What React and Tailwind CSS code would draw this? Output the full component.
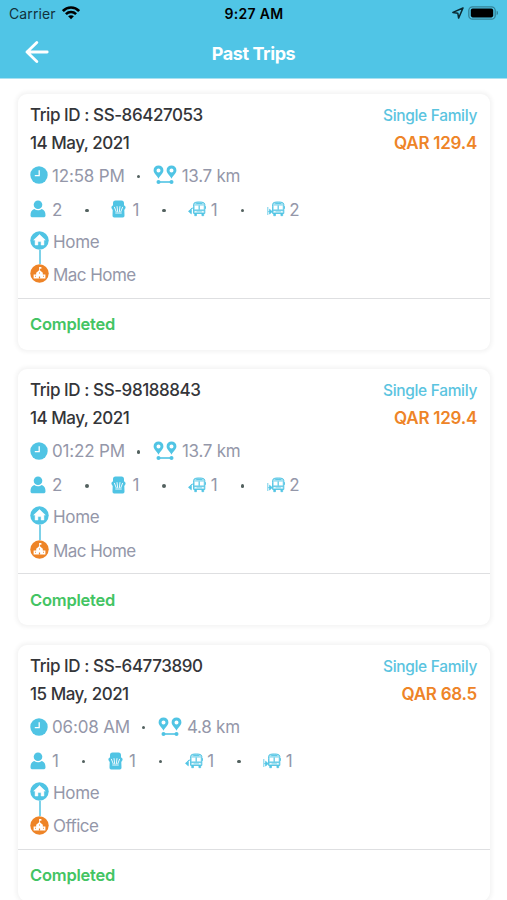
import React from 'react';

const trips = [
  {
    id: 'SS-86427053', date: '14 May, 2021', type: 'Single Family', price: 'QAR 129.4',
    time: '12:58 PM', distance: '13.7 km', counts: [2, 1, 1, 2], from: 'Home', to: 'Mac Home', status: 'Completed',
  },
  {
    id: 'SS-98188843', date: '14 May, 2021', type: 'Single Family', price: 'QAR 129.4',
    time: '01:22 PM', distance: '13.7 km', counts: [2, 1, 1, 2], from: 'Home', to: 'Mac Home', status: 'Completed',
  },
  {
    id: 'SS-64773890', date: '15 May, 2021', type: 'Single Family', price: 'QAR 68.5',
    time: '06:08 AM', distance: '4.8 km', counts: [1, 1, 1, 1], from: 'Home', to: 'Office', status: 'Completed',
  },
];

function WifiIcon() {
  return (
    <svg className="-translate-y-px" width="18" height="14" viewBox="0 0 18 14" fill="none" stroke="#000" strokeWidth="2.6">
      <path d="M.9 5C5.300.4 12.700.4 17.100 5" />
      <path d="M3.900 8.100c2.900-2.800 7.300-2.800 10.200 0" />
      <path d="M6.100 10.300c1.600-1.500 4.200-1.500 5.800 0L9 13.200z" fill="#000" stroke="none" />
    </svg>
  );
}

function LocationIcon() {
  return (
    <svg width="12" height="12" viewBox="0 0 12 12" fill="none" stroke="#0b2a33" strokeWidth="1.500" strokeLinejoin="round">
      <path d="M11 1 .9 5.400l4.900.8.800 4.900z" />
    </svg>
  );
}

function BatteryIcon() {
  return (
    <svg width="31" height="14" viewBox="0 0 31 14">
      <rect x=".8" y=".8" width="26.400" height="12.400" rx="3.800" fill="none" stroke="#348297" strokeWidth="1.300" />
      <rect x="2.800" y="2.600" width="22.400" height="8.800" rx="1.800" fill="#000" />
      <path d="M28.600 4.800c1.900.6 1.900 3.800 0 4.400z" fill="#348297" />
    </svg>
  );
}

function BackIcon() {
  return (
    <svg className="-translate-y-px" width="24" height="22" viewBox="0 0 24 22" fill="none" stroke="#fff" strokeWidth="2.800" strokeLinecap="round" strokeLinejoin="round">
      <path d="M22.200 11H2M11.800 1.500 2 11l9.800 9.500" />
    </svg>
  );
}

function ClockIcon() {
  return (
    <svg width="18" height="18" viewBox="0 0 18 18">
      <circle cx="9" cy="9" r="8.700" fill="#50c4e4" />
      <path d="M9.200 4.200v5.500H4.800" fill="none" stroke="#fff" strokeWidth="1.300" />
    </svg>
  );
}

function RouteIcon() {
  return (
    <svg width="24" height="20" viewBox="0 0 24 20" fill="#50c4e4">
      <path fillRule="evenodd" d="M5.500.4a4.900 4.900 0 0 0-4.900 4.900c0 3.100 3.500 5.400 4.900 8.500 1.400-3.100 4.900-5.400 4.900-8.500A4.900 4.900 0 0 0 5.500.4zm0 3a2 2 0 1 1 0 4 2 2 0 0 1 0-4z" />
      <path fillRule="evenodd" d="M18.500.4a4.900 4.900 0 0 0-4.900 4.900c0 3.100 3.500 5.400 4.900 8.500 1.400-3.100 4.900-5.400 4.900-8.500A4.900 4.900 0 0 0 18.500.4zm0 3a2 2 0 1 1 0 4 2 2 0 0 1 0-4z" />
      <circle cx="5.500" cy="17" r="2" />
      <circle cx="18.500" cy="17" r="2" />
      <path d="M5 16.200h14v1.600H5z" />
    </svg>
  );
}

function PersonIcon() {
  return (
    <svg width="16" height="18" viewBox="0 0 16 18" fill="#50c4e4">
      <circle cx="8" cy="4.800" r="4.300" />
      <path d="M4.200 8.900c2.300 1.900 5.300 1.900 7.600 0 2.600.8 3.700 3.200 3.700 6.300 0 1.400-.8 2.100-2.100 2.100H2.600C1.300 17.300.5 16.600.5 15.200c0-3.100 1.100-5.500 3.700-6.300z" />
    </svg>
  );
}

function SeatIcon() {
  return (
    <svg width="15" height="18" viewBox="0 0 15 18">
      <path d="M4.500.6h6c1.700 0 2.500 1 2.500 2.600v2.400c1.300.2 1.800 1.300 1.500 2.500-.2.900-.8 1.300-1.200 1.800l.2 5.600c0 1.200-.6 1.900-1.700 1.900H3.200c-1.100 0-1.700-.7-1.700-1.900l.2-5.600C1.300 9.400.7 9 .5 8.100.2 6.900.7 5.800 2 5.600V3.200C2 1.600 2.800.6 4.500.6z" fill="#50c4e4" />
      <path d="M3.300 6.900 5.300 12M6 6.200l.7 5.800M9 6.200l-.7 5.800M11.700 6.900 9.700 12M4.300 13h6.400" fill="none" stroke="#fff" strokeWidth=".9" />
    </svg>
  );
}

// side "out" has the arrow leaving the bus, "in" has it going towards the bus
function BusIcon({ side }) {
  return (
    <svg width="18" height="16" viewBox="0 0 18 16" fill="none" stroke="#50c4e4">
      <path d="M5.600 5.200V3.400C5.600 1.500 8 1 11.200 1s5.600.5 5.600 2.400v9H5.600z" fill="#a5e1f1" strokeWidth="1" />
      <path d="M6.800 4.700h3.800v3.700H6.800zM11.800 4.700h3.800v3.700h-3.800z" fill="#fff" stroke="none" />
      <path d="M8.300 2.600h5.800M5.900 9.200h10.700M11.200 4.400v4.300M17.500 5.200v2.600" strokeWidth=".9" />
      <path d="M6.700 12.500h1.800v2.200H6.700zM13.900 12.500h1.800v2.200h-1.800z" fill="#50c4e4" strokeWidth=".7" />
      <path d="M6.900 10.800h1.700M13.900 10.800h1.700" stroke="#fff" strokeWidth="1.100" />
      {side === 'out' ? (
        <path d="M5 7C3.300 7.200 2.400 8 2 9.700M.5 10.300 3.300 8.300v4.500z" fill="#50c4e4" strokeWidth=".8" />
      ) : (
        <path d="M.8 6v8M1.100 10.600h2.500M2.600 8.300l2.600 2.300-2.600 2.400z" fill="#50c4e4" strokeWidth=".8" />
      )}
    </svg>
  );
}

function HomeIcon() {
  return (
    <svg width="19" height="19" viewBox="0 0 19 19">
      <circle cx="9.500" cy="9.500" r="9.200" fill="#50c4e4" />
      <path d="m9.500 3.600 5.800 5.500h-1.400v4.900h-2.800v-3.400H7.900V14H5.100V9.100H3.700z" fill="#fff" stroke="#fff" strokeWidth=".5" strokeLinejoin="round" />
    </svg>
  );
}

function SchoolIcon() {
  return (
    <svg width="19" height="19" viewBox="0 0 19 19">
      <circle cx="9.500" cy="9.500" r="9.200" fill="#ee8427" />
      <path d="M9.100 3h2.300v1.700H9.900v1.500l2.900 2.600v1.600h2.600v4.100H3.600v-4.100h2.600V8.800l2.900-2.600z" fill="#fff" />
      <path d="M8.900 12.600h1.200v1.900H8.900zM5 11.800h.9v1H5zM13.100 11.800h.9v1h-.9zM9 8.600h1v1H9z" fill="#ee8427" />
    </svg>
  );
}

function Dot({ className }) {
  return <span className={`h-[3.5px] w-[3.5px] shrink-0 rounded-full bg-[#53615f] ${className}`} />;
}

function TripCard({ trip }) {
  const items = [
    { icon: <PersonIcon />, gap: 'ml-[6px]' },
    { icon: <SeatIcon />, gap: 'ml-[6px]' },
    { icon: <BusIcon side="out" />, gap: 'ml-[4.5px]' },
    { icon: <BusIcon side="in" />, gap: 'ml-[4.5px]' },
  ];

  return (
    <div className="h-[256px] shrink-0 rounded-[9px] bg-white shadow-[0_0_4px_2px_rgba(0,0,0,0.05)]">
      <div className="h-[205px] border-b-[1.5px] border-[#dedfe1] px-[12.5px] pt-[7.5px] text-[17px] text-[#9497a9]">
        <div className="flex h-7 items-center justify-between">
          <span className="font-medium tracking-[-0.43px] text-[#343539]">Trip ID : {trip.id}</span>
          <span className="text-[15.5px] font-medium tracking-[-0.32px] text-[#5bc4df]">{trip.type}</span>
        </div>
        <div className="flex h-7 items-center justify-between">
          <span className="font-medium tracking-[-0.49px] text-[#343539]">{trip.date}</span>
          <span className="font-semibold tracking-[-0.25px] text-[#ee8427]">{trip.price}</span>
        </div>

        <div className="flex h-[38px] items-center [&>svg]:-translate-y-px">
          <ClockIcon />
          <span className="ml-1 tracking-[-0.17px]">{trip.time}</span>
          <Dot className="mr-[12.5px] ml-3" />
          <RouteIcon />
          <span className="ml-[5px] tracking-[-0.27px]">{trip.distance}</span>
        </div>

        <div className="flex h-[30px] items-center [&>svg]:-translate-y-px">
          {trip.counts.map((count, i) => (
            <React.Fragment key={i}>
              {i > 0 && <Dot className="mr-[22.5px] ml-[23px]" />}
              {items[i].icon}
              <span className={items[i].gap}>{count}</span>
            </React.Fragment>
          ))}
        </div>

        <div className="flex">
          <div className="flex w-[19px] flex-col items-center pt-[5.5px]">
            <HomeIcon />
            <span className="h-[14.5px] w-[2px] bg-[#7dd1e8]" />
            <SchoolIcon />
          </div>
          <div className="ml-1">
            <div className="flex h-[34px] items-center tracking-[-0.35px]">{trip.from}</div>
            <div className="flex h-[33px] items-center tracking-[-0.55px]">{trip.to}</div>
          </div>
        </div>
      </div>
      <div className="flex h-[51px] items-center px-[12.5px] text-[16.5px] font-semibold tracking-[-0.22px] text-[#43c463]">
        {trip.status}
      </div>
    </div>
  );
}

export default function App() {
  return (
    <div className="flex h-[900px] w-[507px] flex-col overflow-hidden bg-white font-['Inter',sans-serif]">
      <header className="h-[79px] shrink-0 border-b border-[#a9e1f1] bg-[#50c5e6]">
        <div className="grid h-[27px] grid-cols-3 items-center pr-[8px] pl-[9px] text-[14px] text-black">
          <div className="flex items-center gap-[6px] text-[#12323c]">
            <span className="tracking-[0.1px]">Carrier</span>
            <WifiIcon />
          </div>
          <span className="text-center font-semibold tracking-[0.3px]">9:27 AM</span>
          <div className="flex -translate-y-px items-center justify-end gap-1">
            <LocationIcon />
            <BatteryIcon />
          </div>
        </div>
        <div className="grid h-[52px] grid-cols-[1fr_auto_1fr] items-center px-[25px]">
          <BackIcon />
          <h1 className="text-[18px] font-bold tracking-[-0.4px] text-white">Past Trips</h1>
        </div>
      </header>

      <main className="flex flex-col gap-[19.7px] px-[17.5px] pt-[14.8px]">
        {trips.map((trip) => (
          <TripCard key={trip.id} trip={trip} />
        ))}
      </main>
    </div>
  );
}
